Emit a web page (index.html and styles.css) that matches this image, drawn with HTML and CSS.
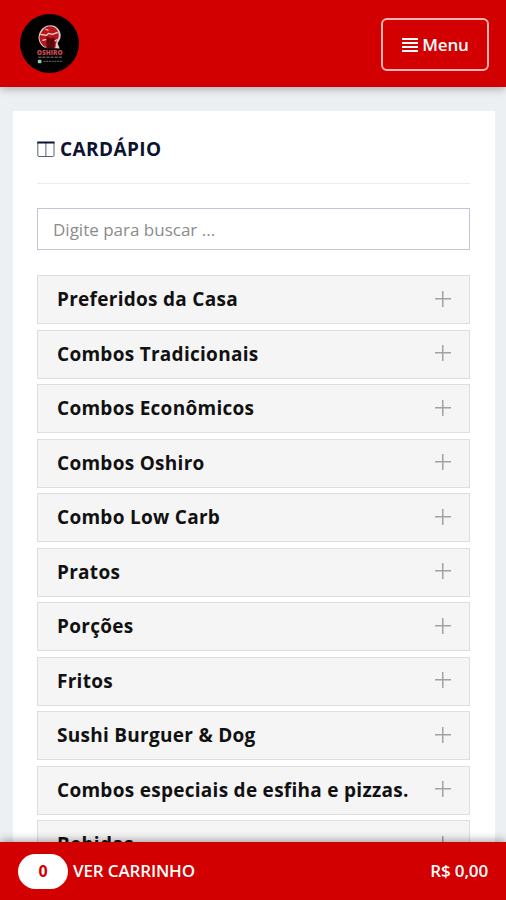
FILE: index.html
```html
<!DOCTYPE html>
<html lang="pt-BR">
<head>
<meta charset="utf-8">
<title>Cardápio</title>
<link rel="stylesheet" href="styles.css">
</head>
<body>
<header class="topbar">
  <svg class="logo" viewBox="0 0 58 58">
    <circle cx="29" cy="29" r="29" fill="#000"/>
    <path d="M24 33c-5-3-7-9-5-14 2-5 6-8 11-8 6 0 10 5 10 10 0 4-2 6-3 8l2 5z" fill="#dccbc9"/>
    <path d="M24 32c-4-3-6-8-4-12 2-4 5-8 9-8 6 0 9 4 9 9s-3 5-3 12z" fill="#b9151a"/>
    <path d="M20 20l6 1 2-2 4 1 5-2M22 26l4-1M33 27l4-2M25 15l3 1" stroke="#f3dcda" stroke-width="1.2" fill="none"/>
    <path d="M26 22l4 2 4-1v11h-8z" fill="#5c080b"/>
    <text x="16.500" y="40" textLength="25.500" lengthAdjust="spacingAndGlyphs" class="logo-name">OSHIRO</text>
    <path d="M18 42.6h24" stroke="#555" stroke-width="1.4" stroke-dasharray="3 1"/>
    <path d="M23 46.6h19" stroke="#555" stroke-width="1.2" stroke-dasharray="2 .7"/>
    <rect x="17.500" y="45" width="3.6" height="3.4" rx="1" fill="#91d5a7"/>
  </svg>
  <button class="menu-button">
    <svg class="bars" viewBox="0 0 16 14"><path d="M0 1h16M0 5h16M0 9h16M0 13h16" stroke="currentColor" stroke-width="2"/></svg>
    <span class="menu-label">Menu</span>
  </button>
</header>

<main class="panel">
  <h1 class="title">
    <svg class="title-icon" viewBox="0 0 18 17"><path d="M.8 1.5v12.8q0 1.2 1.2 1.2h13.8q1.2 0 1.2-1.2V1.5M8.9 2v13.5" fill="none" stroke="#596070"/><path d="M.3 1.5h17.2" stroke="#0b1330" stroke-width="2"/></svg>
    <span class="title-text">CARDÁPIO</span>
  </h1>
  <input class="search" type="text" placeholder="Digite para buscar ...">
  <ul class="categories">
    <li class="category"><span class="name">Preferidos da Casa</span><i class="plus"></i></li>
    <li class="category"><span class="name">Combos Tradicionais</span><i class="plus"></i></li>
    <li class="category"><span class="name">Combos Econômicos</span><i class="plus"></i></li>
    <li class="category"><span class="name">Combos Oshiro</span><i class="plus"></i></li>
    <li class="category"><span class="name">Combo Low Carb</span><i class="plus"></i></li>
    <li class="category"><span class="name">Pratos</span><i class="plus"></i></li>
    <li class="category"><span class="name">Porções</span><i class="plus"></i></li>
    <li class="category"><span class="name">Fritos</span><i class="plus"></i></li>
    <li class="category"><span class="name">Sushi Burguer &amp; Dog</span><i class="plus"></i></li>
    <li class="category"><span class="name">Combos especiais de esfiha e pizzas.</span><i class="plus"></i></li>
    <li class="category"><span class="name">Bebidas</span><i class="plus"></i></li>
  </ul>
</main>

<footer class="cart">
  <span class="count">0</span>
  <span class="cart-label">VER CARRINHO</span>
  <span class="total">R$ 0,00</span>
</footer>
</body>
</html>
```
FILE: styles.css
```css
* { box-sizing: border-box; }

body {
  margin: 0;
  height: 900px;
  overflow: hidden;
  display: flex;
  flex-direction: column;
  background: #ecf0f3;
  font-family: "Open Sans", sans-serif;
}

.topbar {
  flex: none;
  height: 87px;
  padding: 0 17px 0 20px;
  display: flex;
  align-items: center;
  justify-content: space-between;
  background: #d20000;
  box-shadow: 0 1px 9px rgba(0, 0, 0, .35);
}

.logo { width: 59px; height: 59px; }

.logo-name {
  font: 800 7.5px "Open Sans", sans-serif;
  fill: #c9474c;
}

.menu-button {
  width: 108px;
  height: 53px;
  margin-top: 2px;
  padding: 0;
  display: flex;
  align-items: center;
  justify-content: center;
  gap: 4px;
  background: none;
  border: 2px solid #ffb4b4;
  border-radius: 6px;
  color: #fff;
  font: 600 17px "Open Sans", sans-serif;
}

.bars { width: 16px; height: 14px; margin-left: 1px; }

.menu-label { letter-spacing: -.2px; }

.panel {
  flex: 1;
  min-height: 0;
  overflow: hidden;
  margin: 24px 11px 0 13px;
  padding: 0 25px 0 24px;
  background: #fff;
}

.title {
  height: 73px;
  margin: 0 0 24px;
  padding-top: 4px;
  display: flex;
  align-items: center;
  gap: 5px;
  border-bottom: 1px solid #ececef;
  color: #0b1330;
  font-size: 19px;
  font-weight: 700;
  letter-spacing: .4px;
}

.title-icon { width: 18px; height: 17px; margin-top: 1px; }

.title-text { margin-top: -1px; }

.search {
  display: block;
  width: 100%;
  height: 42px;
  padding: 0 15px;
  border: 1px solid #c4c4d6;
  border-radius: 0;
  background: #fff;
  font: 17px "Open Sans", sans-serif;
}

.search::placeholder { color: #8b8b8b; opacity: 1; }

.categories {
  margin: 25px 0 0;
  padding: 0;
  list-style: none;
  display: flex;
  flex-direction: column;
  gap: 5.5px;
}

.category {
  flex: none;
  height: 49px;
  padding: 0 18px 0 19px;
  display: flex;
  align-items: center;
  justify-content: space-between;
  background: #f5f5f5;
  border: 1px solid #dedede;
  color: #111;
  font-size: 19px;
  font-weight: 700;
  letter-spacing: .28px;
}

.name { margin-top: -1px; }

.plus {
  width: 16px;
  height: 16px;
  margin-top: -2px;
  background:
    linear-gradient(#a2a2a2, #a2a2a2) center / 16px 1.5px no-repeat,
    linear-gradient(#a2a2a2, #a2a2a2) center / 1.5px 16px no-repeat;
}

.cart {
  flex: none;
  position: relative;
  height: 58px;
  padding: 0 18px;
  display: flex;
  align-items: center;
  background: #d20000;
  box-shadow: 0 -1px 9px rgba(0, 0, 0, .4);
  color: #fff;
  font-size: 17px;
  font-weight: 600;
}

.count {
  width: 50px;
  height: 35px;
  margin-right: 5px;
  display: flex;
  align-items: center;
  justify-content: center;
  background: #fff;
  border-radius: 18px;
  color: #d20000;
  font-size: 16px;
  font-weight: 700;
}

.cart-label { margin-top: -1px; letter-spacing: -.15px; }

.total { margin: -1px 0 0 auto; letter-spacing: -.15px; }
```
